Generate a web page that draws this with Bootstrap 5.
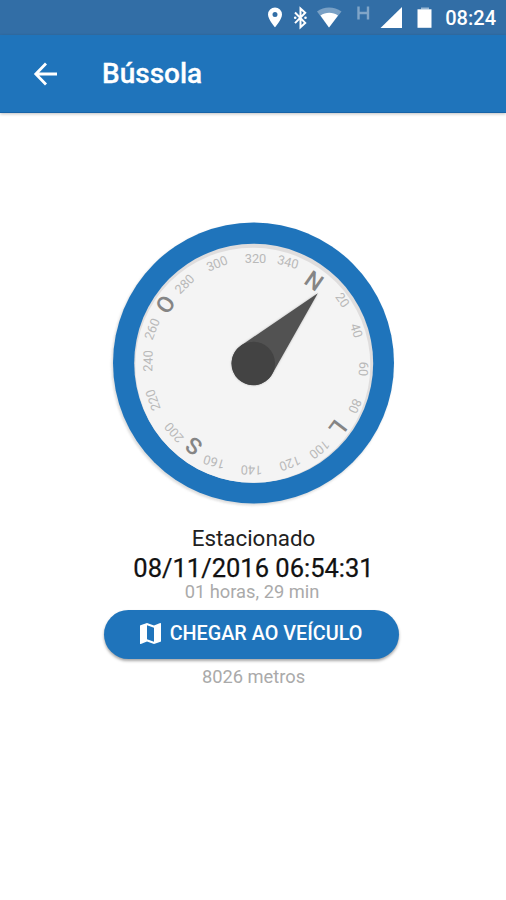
<!DOCTYPE html>
<html lang="pt">
<head>
<meta charset="utf-8">
<meta name="viewport" content="width=device-width, initial-scale=1">
<title>Bússola</title>
<link href="https://cdn.jsdelivr.net/npm/bootstrap@5.3.0/dist/css/bootstrap.min.css" rel="stylesheet">
<style>
body{font-family:Roboto,"Liberation Sans",sans-serif;background:#fff;color:#212121;min-height:900px;overflow:hidden}
.status-bar{height:35px;background:#326ea6;padding-right:10px}
.status-bar svg{height:35px;width:176px}
.clock{font-size:20px;font-weight:500;line-height:36px;margin-left:5px}
.app-bar{height:78px;background:#1f74bb;border-bottom:1px solid #1763a8;box-shadow:0 1px 3px rgba(0,0,0,.25);padding:0 0 0 33px!important}
.app-title{font-size:28px;font-weight:500;line-height:77px;margin-left:44px;-webkit-text-stroke:.3px #fff}
.dial{width:300px;height:300px;margin-top:100px;margin-left:1px}
.num{font-size:12.8px;fill:#b9b9b9}
.dir{font-size:23px;font-weight:500;fill:#858585}
.t-state{font-size:22.4px;line-height:28px;margin-top:11px;padding-left:1px}
.t-date{font-size:25.5px;line-height:32px;color:#111;padding-left:1px;-webkit-text-stroke:.25px #111}
.t-soft{font-size:18.3px;line-height:20px;color:#aaa;padding-right:2px}
.t-elapsed{margin-top:-2px}
.t-distance{padding-right:0;padding-left:1px}
.btn-go{width:295px;height:49px;background:#1f74bb!important;color:#fff!important;font-size:19.8px;font-weight:500;box-shadow:0 2px 3px rgba(0,0,0,.35);margin:8px 4px 8px 0;padding:0 0 2px 0;border:0}
.btn-label{margin-left:1px}
</style>
</head>
<body>
<header class="text-white">
  <div class="status-bar d-flex justify-content-end">
    <svg viewBox="264 0 176 35" fill="#fff">
      <path fill-rule="evenodd" d="M275 7.500a7 7 0 0 0-7 7c0 5 7 12.800 7 12.800s7-7.800 7-12.800a7 7 0 0 0-7-7zm0 4.500a2.500 2.500 0 1 1 0 5 2.500 2.500 0 0 1 0-5z"/>
      <path d="M295 12.500l10.200 10.400-4.700 4.400V8.500l4.700 4.200L295 23.100" fill="none" stroke="#fff" stroke-width="2"/>
      <circle cx="295.200" cy="17.800" r="1.300"/><circle cx="305.500" cy="17.800" r="1.300"/>
      <path d="M317 11.500c7-5.300 17-5.300 24.500 0L329 27.500z" opacity=".35"/>
      <path d="M320.500 15.500c5-3.700 12.500-3.700 17.500 0L329 27.500z"/>
      <path d="M358.500 6.500v13M368 6.500v13M358.500 13h9.500" fill="none" stroke="#fff" stroke-width="2.400" opacity=".38"/>
      <path d="M402 7v21h-21.500z"/>
      <path d="M421 7.500h8v2h-8z" opacity=".5"/><path d="M417.500 9.300h14v18.500h-14z"/>
    </svg>
    <span class="clock" id="clock">08:24</span>
  </div>
  <nav class="app-bar navbar d-flex align-items-center justify-content-start">
    <svg width="25" height="24" viewBox="0 0 25 24" fill="none" stroke="#fff" stroke-width="2.800"><path d="M24 12H4M13 1.500L2.800 12 13 22.500"/></svg>
    <span class="app-title">Bússola</span>
  </nav>
</header>
<main class="d-flex flex-column align-items-center text-center">
  <svg class="dial" viewBox="104 213 300 300" text-anchor="middle">
    <defs>
      <filter id="sh" x="-10%" y="-10%" width="120%" height="120%"><feGaussianBlur stdDeviation="1.200"/></filter>
    </defs>
    <circle cx="252.300" cy="364.700" r="140.800" fill="#cfcfcf" opacity=".7" filter="url(#sh)"/>
    <circle cx="253.500" cy="363" r="140.500" fill="#1f74bb"/>
    <circle cx="253.700" cy="363.300" r="119.500" fill="#dfdddd"/>
    <circle cx="252.800" cy="365.200" r="117.500" fill="#f4f4f4"/>
    <g class="num">
      <text transform="translate(342.500 300) rotate(54)" y="4.500">20</text>
      <text transform="translate(356.500 330.500) rotate(73)" y="4.500">40</text>
      <text transform="translate(363.500 369) rotate(93)" y="4.500">60</text>
      <text transform="translate(355 406) rotate(113)" y="4.500">80</text>
      <text transform="translate(319.500 449.500) rotate(141)" y="4.500">100</text>
      <text transform="translate(290 463.500) rotate(160)" y="4.500">120</text>
      <text transform="translate(251.500 470) rotate(181)" y="4.500">140</text>
      <text transform="translate(214 462) rotate(197)" y="4.500">160</text>
      <text transform="translate(174 432.500) rotate(229)" y="4.500">200</text>
      <text transform="translate(153 400) rotate(251)" y="4.500">220</text>
      <text transform="translate(148 361) rotate(271)" y="4.500">240</text>
      <text transform="translate(152 329) rotate(292)" y="4.500">260</text>
      <text transform="translate(184.500 284) rotate(315)" y="4.500">280</text>
      <text transform="translate(217 263.500) rotate(338)" y="4.500">300</text>
      <text transform="translate(255.500 258) rotate(0)" y="4.500">320</text>
      <text transform="translate(288 262) rotate(15)" y="4.500">340</text>
    </g>
    <g class="dir">
      <text transform="translate(314 281) rotate(35)" y="8">N</text>
      <text transform="translate(338 428) rotate(127)" y="8">L</text>
      <text transform="translate(194 446) rotate(215)" y="8">S</text>
      <text transform="translate(165.500 304.500) rotate(305)" y="8">O</text>
    </g>
    <path d="M317.800 293.200L241.100 345.500A21.700 21.700 0 1 0 272.200 374.050Z" fill="#777" opacity=".5" filter="url(#sh)"/>
    <path d="M317.800 293.200L241.100 345.500A21.700 21.700 0 1 0 272.200 374.050Z" fill="#525252"/>
    <circle cx="253.300" cy="363.400" r="21.700" fill="#434343"/>
  </svg>
  <div class="t-state"><span>Estacionado</span></div>
  <div class="t-date"><span>08/11/2016 06:54:31</span></div>
  <div class="t-soft t-elapsed"><span>01 horas, 29 min</span></div>
  <button class="btn btn-go rounded-pill d-flex align-items-center justify-content-center gap-2">
    <svg width="21" height="21" viewBox="3 3 18 18" fill="#fff"><path d="M20.500 3l-.160.030L15 5.100 9 3 3.360 4.900c-.210.070-.360.250-.360.480V20.500c0 .280.220.500.500.500l.160-.030L9 18.900l6 2.100 5.640-1.900c.210-.070.360-.250.360-.480V3.500c0-.280-.220-.500-.500-.500zM15 19l-6-2.110V5l6 2.110V19z"/></svg>
    <span class="btn-label">CHEGAR AO VEÍCULO</span>
  </button>
  <div class="t-soft t-distance"><span>8026 metros</span></div>
</main>
<script src="https://cdn.jsdelivr.net/npm/bootstrap@5.3.0/dist/js/bootstrap.bundle.min.js"></script>
</body>
</html>
